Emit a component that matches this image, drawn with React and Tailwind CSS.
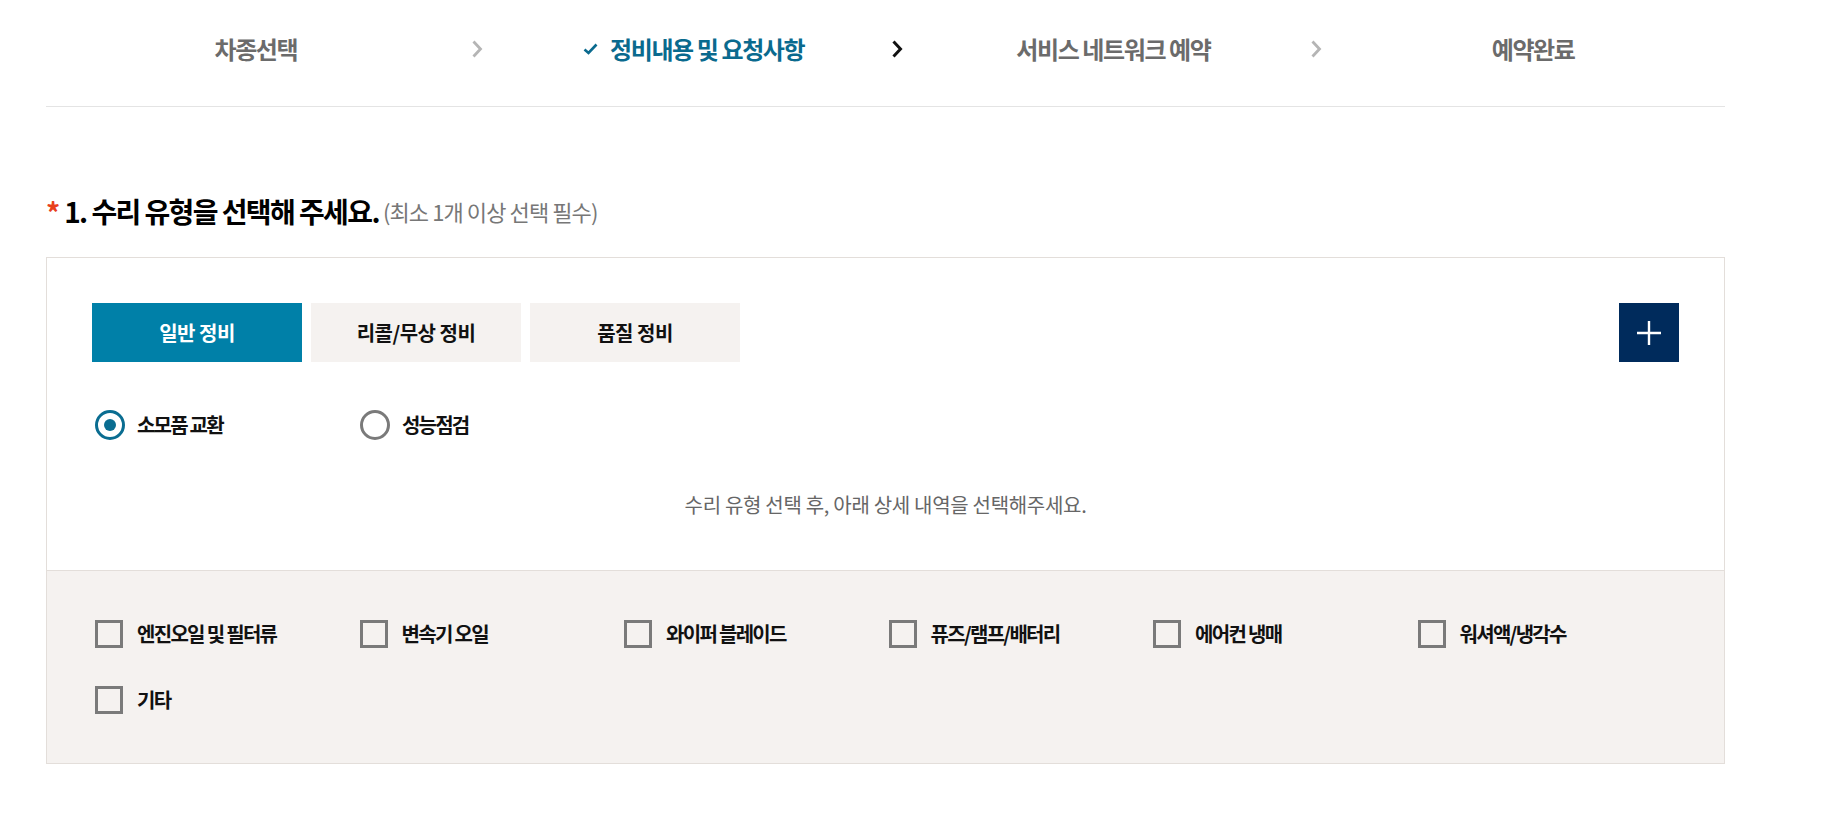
import { useState } from "react";

const steps = ["차종선택", "정비내용 및 요청사항", "서비스 네트워크 예약", "예약완료"];
const tabs = ["일반 정비", "리콜/무상 정비", "품질 정비"];
const radios = ["소모품 교환", "성능점검"];
const parts = ["엔진오일 및 필터류", "변속기 오일", "와이퍼 블레이드", "퓨즈/램프/배터리", "에어컨 냉매", "워셔액/냉각수", "기타"];

function Chevron({ dark }) {
  return (
    <svg width="14" height="20" viewBox="0 0 14 20" fill="none">
      <path
        d="M3.5 2.5 L10.5 10 L3.5 17.5"
        stroke={dark ? "#111" : "#b5b5b5"}
        strokeWidth={dark ? 3 : 2.8}
        strokeLinejoin="miter"
      />
    </svg>
  );
}

export default function App() {
  const [tab, setTab] = useState(0);
  const [radio, setRadio] = useState(0);
  const [checked, setChecked] = useState([]);

  const toggle = (i) =>
    setChecked((c) => (c.includes(i) ? c.filter((x) => x !== i) : [...c, i]));

  return (
    <div className="min-h-screen bg-white font-['Noto_Sans_CJK_KR','Noto_Sans',sans-serif]">
      <div className="ml-[46px] w-[1679px]">
        {/* Steps */}
        <ul className="flex h-[107px] pb-[9px] border-b border-[#e4e4e4]">
          {steps.map((s, i) => (
            <li key={s} className="flex-1 flex items-center">
              {i > 0 && (
                <span className="w-[36px] pl-[4px] flex items-center">
                  <Chevron dark={i === 2} />
                </span>
              )}
              <span
                className={`flex-1 flex items-center justify-center gap-[12px] text-[24px] font-bold tracking-[-1.4px] ${
                  i === 1 ? "text-[#0a6a8e]" : "text-[#6b6b6b]"
                }`}
              >
                {i === 1 && (
                  <svg width="15" height="12" viewBox="0 0 15 12" fill="none">
                    <path d="M1.5 6.5 L5.5 10 L13.5 1.5" stroke="#0a6a8e" strokeWidth="2.6" />
                  </svg>
                )}
                {s}
              </span>
            </li>
          ))}
        </ul>

        {/* Title */}
        <h2 className="mt-[89px] h-[30px] flex items-center leading-[30px]">
          <span className="text-[#e8401c] text-[28px] font-bold mr-[4px] mt-[2px]">*</span>
          <span className="text-[28px] font-bold text-black tracking-[-1.6px]">1. 수리 유형을 선택해 주세요.</span>
          <span className="ml-[4px] text-[22px] text-[#777] tracking-[-0.9px]">(최소 1개 이상 선택 필수)</span>
        </h2>

        {/* Box */}
        <div className="mt-[31px] border border-[#e3deda]">
          <div className="px-[45px] pt-[45px] pb-[52px]">
            <div className="flex items-start justify-between">
              <div className="flex gap-[9px]">
                {tabs.map((t, i) => (
                  <button
                    key={t}
                    onClick={() => setTab(i)}
                    className={`w-[210px] h-[59px] flex items-center justify-center text-[20px] font-bold tracking-[-0.5px] ${
                      tab === i ? "bg-[#0080a8] text-white" : "bg-[#f5f2f0] text-[#111]"
                    }`}
                  >
                    {t}
                  </button>
                ))}
              </div>
              <button className="w-[60px] h-[59px] bg-[#002b5c] flex items-center justify-center">
                <svg width="26" height="26" viewBox="0 0 26 26">
                  <path d="M13 1 V25 M1 13 H25" stroke="#fff" strokeWidth="2.4" />
                </svg>
              </button>
            </div>

            <div className="mt-[48px] flex">
              {radios.map((r, i) => (
                <label
                  key={r}
                  onClick={() => setRadio(i)}
                  className="w-[265px] pl-[3px] flex items-center gap-[12px] cursor-pointer"
                >
                  <span
                    className={`w-[30px] h-[30px] rounded-full border-[3px] flex items-center justify-center ${
                      radio === i ? "border-[#0a6d91]" : "border-[#7a7a7a]"
                    }`}
                  >
                    {radio === i && <span className="w-[12px] h-[12px] rounded-full bg-[#0a6d91]" />}
                  </span>
                  <span className="text-[20px] font-bold text-[#111] tracking-[-1.8px]">{r}</span>
                </label>
              ))}
            </div>

            <p className="mt-[52px] text-center text-[20px] leading-[26px] text-[#666] tracking-[-0.3px]">
              수리 유형 선택 후, 아래 상세 내역을 선택해주세요.
            </p>
          </div>

          <div className="border-t border-[#e3deda] bg-[#f5f2f0] px-[45px] pt-[49px] pb-[49px]">
            <div className="grid grid-cols-6 gap-y-[38px]">
              {parts.map((p, i) => (
                <label
                  key={p}
                  onClick={() => toggle(i)}
                  className="pl-[3px] h-[28px] flex items-center gap-[14px] cursor-pointer"
                >
                  <span
                    className={`w-[28px] h-[28px] border-[3px] border-[#7a7a7a] bg-transparent flex items-center justify-center ${
                      checked.includes(i) ? "bg-[#0a6d91] border-[#0a6d91]" : ""
                    }`}
                  />
                  <span className="text-[20px] font-bold text-[#111] tracking-[-1.7px]">{p}</span>
                </label>
              ))}
            </div>
          </div>
        </div>
      </div>
    </div>
  );
}
